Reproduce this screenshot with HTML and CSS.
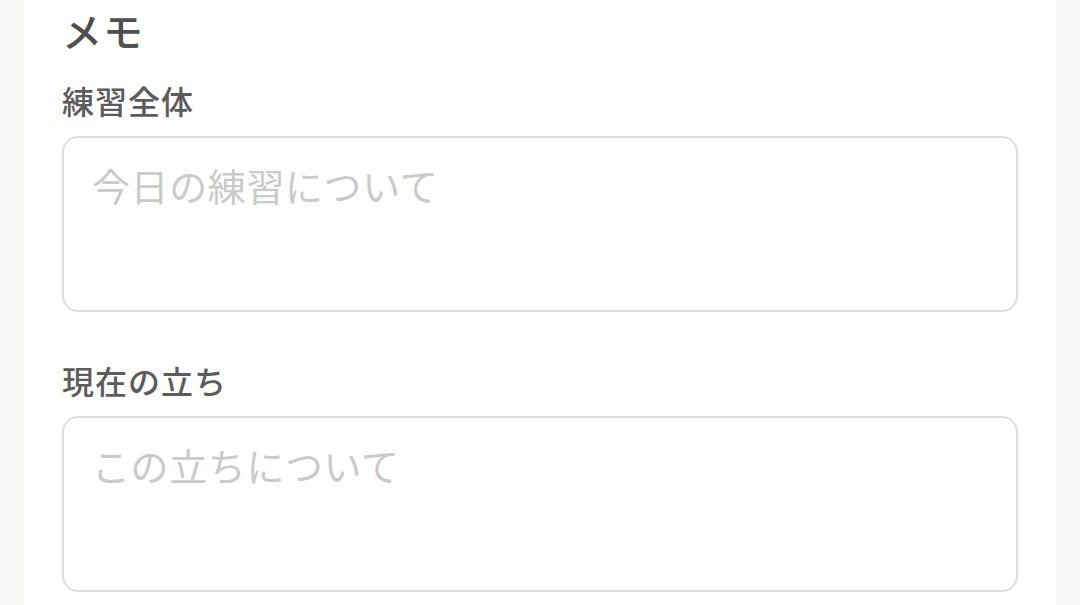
FILE: index.html
```html
<!DOCTYPE html>
<html lang="ja">
<head>
    <meta charset="UTF-8">
    <meta name="viewport" content="width=device-width, initial-scale=1.0">
    <title>メモ</title>
    <link rel="stylesheet" href="styles.css">
</head>
<body>
    <div class="page">
        <div class="card">
            <h2 class="section-title">メモ</h2>
            <div class="form-group">
                <label for="memoAll">練習全体</label>
                <textarea id="memoAll" name="memo_all" placeholder="今日の練習について"></textarea>
            </div>
            <div class="form-group">
                <label for="memoPos">現在の立ち</label>
                <textarea id="memoPos" name="memo_position" placeholder="この立ちについて"></textarea>
            </div>
        </div>
    </div>
</body>
</html>
```

FILE: styles.css
```css
body {
    font-family: "Noto Sans CJK JP", "Noto Sans", sans-serif;
    margin: 0;
    padding: 0;
    background-color: #f9f9f7;
    overflow: hidden;
}
.page {
    padding: 0 24px;
}
.card {
    background-color: white;
    padding: 6px 38px 40px;
    min-height: 700px;
}
.section-title {
    margin: 0 0 22px;
    font-size: 40px;
    line-height: 48px;
    font-weight: 500;
    color: #505050;
    letter-spacing: 1px;
}
.form-group {
    margin-bottom: 44px;
}
label {
    display: block;
    margin-bottom: 12px;
    font-size: 32px;
    line-height: 48px;
    font-weight: 500;
    color: #5c5c5c;
    letter-spacing: 1px;
}
textarea {
    display: block;
    width: 100%;
    height: 176px;
    padding: 18px 28px;
    border: 2px solid #dedede;
    border-radius: 16px;
    box-sizing: border-box;
    font-family: "Noto Sans CJK JP", "Noto Sans", sans-serif;
    font-size: 38px;
    line-height: 1.5;
    letter-spacing: 0.6px;
    color: #333;
    resize: none;
    outline: none;
}
textarea::placeholder {
    color: #cacaca;
}
```
